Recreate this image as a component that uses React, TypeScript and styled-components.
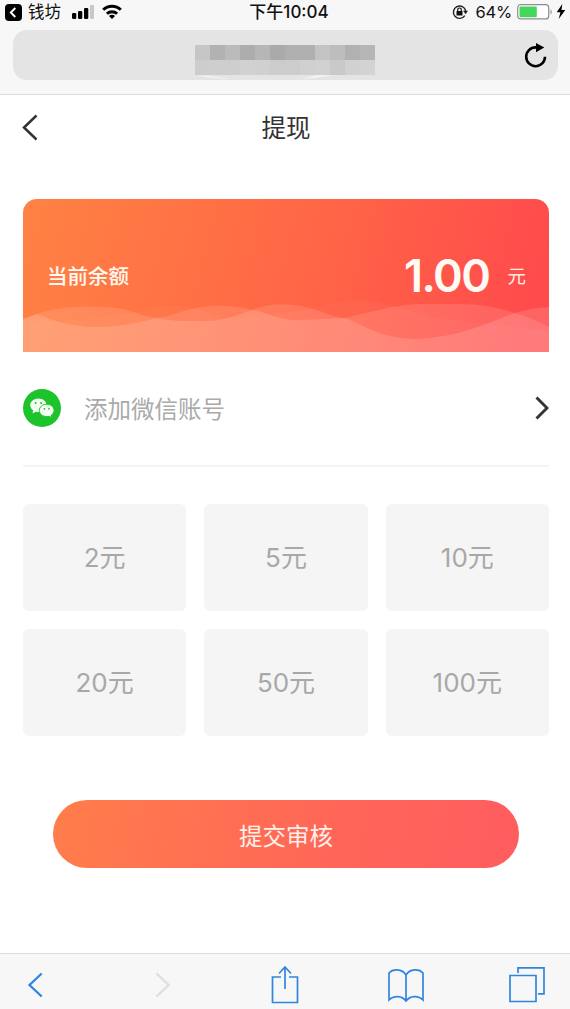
import React from "react";
import styled, { createGlobalStyle } from "styled-components";

const GlobalStyle = createGlobalStyle`
  * { box-sizing: border-box; }
  body { margin: 0; background: #fff; }
`;

const Screen = styled.div`
  display: flex;
  flex-direction: column;
  width: 570px;
  height: 1009px;
  overflow: hidden;
  background: #fff;
  color: #333;
  font-family: Inter, "Noto Sans CJK SC", sans-serif;
`;

const BrowserTop = styled.header`
  height: 95px;
  flex: none;
  background: #f7f7f7;
  border-bottom: 1px solid #dcdcdc;
`;

const StatusBar = styled.div`
  display: grid;
  grid-template-columns: 1fr auto 1fr;
  align-items: center;
  height: 24px;
  margin-bottom: 6px;
  padding: 0 4px 0 5px;
  font-size: 17px;
  line-height: 24px;
  color: #111;
`;

const StatusGroup = styled.div<{ $end?: boolean }>`
  display: flex;
  align-items: center;
  justify-content: ${(p) => (p.$end ? "flex-end" : "flex-start")};
  svg { display: block; flex: none; }
`;

const AppName = styled.span`
  margin: 0 11px 0 6px;
  font-size: 16.5px;
`;

const WifiIcon = styled.svg`
  margin-left: 7px;
  margin-bottom: 2px;
`;

const BoltIcon = styled.svg`
  margin-left: 3px;
  margin-bottom: 2px;
`;

const Clock = styled.span`
  font-size: 17px;
  font-weight: 500;
  padding-left: 7px;
`;

const Percent = styled.span`
  margin: 0 5px 0 8px;
  font-size: 16.5px;
  letter-spacing: -0.2px;
`;

const AddressBar = styled.div`
  position: relative;
  display: flex;
  align-items: center;
  justify-content: center;
  height: 50px;
  margin: 0 12px 0 13px;
  padding-right: 2px;
  border-radius: 14px;
  background: #e4e4e4;
`;

const Mosaic = styled.div`
  display: grid;
  grid-template-columns: repeat(12, 15px);
  grid-auto-rows: 15px;
  margin-top: 9px;
`;

const Block = styled.i<{ $shade: string }>`
  background: ${(p) => p.$shade};
`;

const Glare = styled.svg`
  position: absolute;
  left: 184px;
  top: 45px;
`;

const Reload = styled.svg`
  position: absolute;
  right: 9px;
  top: 12px;
`;

const TitleBar = styled.nav`
  display: grid;
  grid-template-columns: 40px 1fr 40px;
  align-items: center;
  flex: none;
  height: 66px;
  padding: 0 20px 0 22px;
  svg { display: block; margin-bottom: 1px; }
`;

const Title = styled.h1`
  margin: 0;
  font-size: 24.5px;
  font-weight: 400;
  line-height: 36px;
  text-align: center;
`;

const Content = styled.main`
  display: flex;
  flex-direction: column;
  flex: 1;
  padding: 38px 21px 0 23px;
`;

const BalanceCard = styled.section`
  position: relative;
  display: flex;
  align-items: center;
  flex: none;
  height: 153px;
  padding: 0 23px 1px 24px;
  border-radius: 14px 14px 0 0;
  overflow: hidden;
  color: #fffaf4;
  background: linear-gradient(105deg, #ff8243 0%, #ff6846 50%, #ff4b4c 95%);
`;

const Waves = styled.svg`
  position: absolute;
  left: 0;
  bottom: 0;
`;

const BalanceLabel = styled.span`
  flex: 1;
  padding-bottom: 1px;
  font-size: 20.5px;
  font-weight: 500;
`;

const BalanceValue = styled.strong`
  font-size: 45px;
  font-weight: 600;
  letter-spacing: -1.5px;
`;

const BalanceUnit = styled.span`
  margin-left: 18px;
  padding-bottom: 1px;
  font-size: 18.5px;
  color: #ffeee4;
`;

const AccountRow = styled.section`
  display: flex;
  align-items: center;
  flex: none;
  height: 115px;
  padding-bottom: 1px;
  border-bottom: 2px solid #f4f4f4;
  svg { display: block; flex: none; }
`;

const AccountText = styled.span`
  flex: 1;
  margin-left: 23px;
  font-size: 23.5px;
  color: #aaa;
`;

const Amounts = styled.section`
  display: grid;
  grid-template-columns: repeat(3, 1fr);
  grid-auto-rows: 107px;
  gap: 18px;
  margin-top: 37px;
`;

const Amount = styled.button`
  padding: 1px 0 0;
  border: 0;
  border-radius: 6px;
  background: #f5f5f5;
  color: #a8a8a8;
  font: 400 26px/38px Inter, "Noto Sans CJK SC", sans-serif;
`;

const Submit = styled.button`
  height: 68px;
  margin: 64px 30px 0;
  padding: 5px 0 0;
  border: 0;
  border-radius: 34px;
  background: linear-gradient(100deg, #ff7d4b 0%, #ff6658 60%, #ff5c5f 100%);
  color: #fff1e9;
  font: 400 23.5px/34px Inter, "Noto Sans CJK SC", sans-serif;
`;

const Toolbar = styled.footer`
  display: flex;
  align-items: center;
  flex: none;
  height: 56px;
  padding: 7px 0 0;
  border-top: 1px solid #dcdcdc;
  background: #f7f7f7;
`;

const ToolIcon = styled.svg<{ $gap: number }>`
  display: block;
  flex: none;
  margin-left: ${(p) => p.$gap}px;
  fill: none;
  stroke: #2f86e0;
  stroke-width: 1.7;
`;

const topRow = ["#c6c6c6", "#b2b2b2", "#bbbbbb", "#adadad", "#b6b6b6", "#aaaaaa", "#b0b0b0", "#b0b0b0", "#c3c3c3", "#bdbdbd", "#b1b1b1", "#b6b6b6"];
const bottomRow = ["#cdcdcd", "#cecece", "#cecece", "#d1d1d1", "#d0d0d0", "#cccccc", "#cccccc", "#d0d0d0", "#d1d1d1", "#c9c9c9", "#d1d1d1", "#d3d3d3"];
const amounts = [2, 5, 10, 20, 50, 100];

const WechatIcon = () => (
  <svg width="38" height="38" viewBox="0 0 38 38">
    <circle cx="19" cy="19" r="19" fill="#1dc32b" />
    <path d="M15.300 9.400c-4.500 0-8.100 3-8.100 6.700 0 2.200 1.200 4 3 5.300l-.7 3 3.300-1.700c.8.200 1.600.3 2.500.3 4.500 0 8.200-3 8.200-6.900s-3.700-6.700-8.200-6.700z" fill="#f4fff2" />
    <path d="M23.800 15.200c-4.200 0-7.500 2.800-7.500 6.200s3.300 6.200 7.500 6.200c.8 0 1.600-.1 2.300-.3l2.800 1.500-.7-2.600c1.800-1.100 2.900-2.800 2.900-4.800 0-3.400-3.300-6.200-7.300-6.200z" fill="#f4fff2" stroke="#1dc32b" strokeWidth="1" />
    <g fill="#1dc32b">
      <circle cx="12.600" cy="13.900" r="1" /><circle cx="18.100" cy="13.900" r="1" />
      <circle cx="21.400" cy="19.800" r=".9" /><circle cx="26" cy="19.800" r=".9" />
    </g>
  </svg>
);

export default function App() {
  return (
    <Screen>
      <GlobalStyle />
      <BrowserTop>
        <StatusBar>
          <StatusGroup>
            <svg width="17" height="17" viewBox="0 0 17 17">
              <rect width="17" height="17" rx="4" fill="#000" />
              <path d="M10.300 4 5.800 8.500l4.500 4.500" fill="none" stroke="#fff" strokeWidth="1.900" />
            </svg>
            <AppName>钱坊</AppName>
            <svg width="23" height="14" viewBox="0 0 23 14">
              <rect x="0" y="8" width="4.300" height="6" rx="1.300" />
              <rect x="6" y="6" width="4.300" height="8" rx="1.300" />
              <rect x="12" y="3" width="4.300" height="11" rx="1.300" />
              <rect x="18" y="0" width="4" height="14" rx="1.300" fill="#c8c8c8" />
            </svg>
            <WifiIcon width="20" height="15" viewBox="0 0 20 15">
              <g fill="none" stroke="#000" strokeWidth="2.900">
                <path d="M1.200 5.800a12.500 12.500 0 0 1 17.600 0" />
                <path d="M4.900 9.800a7.300 7.300 0 0 1 10.200 0" />
              </g>
              <path d="M10 15 7 12a4.200 4.200 0 0 1 6 0z" />
            </WifiIcon>
          </StatusGroup>
          <Clock>下午10:04</Clock>
          <StatusGroup $end>
            <svg width="16" height="16" viewBox="0 0 16 16">
              <path d="M12.800 11.600A6.200 6.200 0 1 1 13.700 7" fill="none" stroke="#222" strokeWidth="1.400" />
              <path d="M11 6.800h5l-2.400 3.400z" fill="#222" />
              <rect x="4.500" y="6.900" width="6" height="4.600" rx=".5" fill="#111" />
              <path d="M5.700 7V5.800a1.800 1.800 0 0 1 3.600 0V7" fill="none" stroke="#111" strokeWidth="1.200" />
            </svg>
            <Percent>64%</Percent>
            <svg width="36" height="16" viewBox="0 0 36 16">
              <rect x=".7" y=".7" width="31" height="14.200" rx="3" fill="#fff" stroke="#8d8d8d" strokeWidth="1.200" />
              <rect x="2.500" y="2.400" width="17.300" height="10.800" rx="1" fill="#45d75d" />
              <path d="M33.500 5.400c1.600.6 1.600 4.200 0 4.800z" fill="#8d8d8d" />
            </svg>
            <BoltIcon width="10" height="15" viewBox="0 0 10 15">
              <path d="M6.300 0 .7 8.200h3.700L2.700 15l6.600-9H5.500z" />
            </BoltIcon>
          </StatusGroup>
        </StatusBar>
        <AddressBar>
          <Mosaic>
            {[...topRow, ...bottomRow].map((shade, i) => <Block key={i} $shade={shade} />)}
          </Mosaic>
          <Glare width="150" height="5" viewBox="0 0 150 5">
            <path d="M0 .800q15 3 34 3.200Q20 2 10 .800zM104 4Q124 3 136 .300h-18q-5 2-14 3.700z" fill="#f3f3f3" />
          </Glare>
          <Reload width="28" height="28" viewBox="0 0 28 28">
            <path d="M24 14.800A9.400 9.400 0 1 1 14.600 5.400H17" fill="none" stroke="#000" strokeWidth="2.600" />
            <path d="M15 .900v9.400l8.300-4.700z" />
          </Reload>
        </AddressBar>
      </BrowserTop>

      <TitleBar>
        <svg width="16" height="27" viewBox="0 0 16 27">
          <path d="M14.500 1.500 2 13.500l12.500 12" fill="none" stroke="#333" strokeWidth="2.500" />
        </svg>
        <Title>提现</Title>
      </TitleBar>

      <Content>
        <BalanceCard>
          <Waves width="526" height="153" viewBox="0 0 526 153" fill="#fff">
            <path fillOpacity=".03" d="M0 153V122Q60 124 117 112Q140 104 166 108L210 120L290 110Q330 94 370 107L420 120L526 132V153z" />
            <path fillOpacity=".12" d="M0 153V120L14 115C36 106 88 105 110 113Q123 118 134 119Q145 118 155 114C180 105 207 105 229 111C251 102 275 104 299 113Q310 118 322 119C348 113 373 105 402 105H430C466 104 487 112 509 120L526 128V153z" />
            <path fillOpacity=".14" d="M0 153V120L14 115C35 123 51 128 72 128C99 128 119 123 134 119C150 123 169 122 185 122C204 121 216 115 229 111C247 114 259 123 279 121L322 119C350 131 363 140 395 140C438 137 459 126 479 119C497 111 512 109 526 108V153z" />
          </Waves>
          <BalanceLabel>当前余额</BalanceLabel>
          <BalanceValue>1.00</BalanceValue>
          <BalanceUnit>元</BalanceUnit>
        </BalanceCard>

        <AccountRow>
          <WechatIcon />
          <AccountText>添加微信账号</AccountText>
          <svg width="15" height="24" viewBox="0 0 15 24">
            <path d="M2.500 1.500 13 12 2.500 22.500" fill="none" stroke="#333" strokeWidth="2.900" />
          </svg>
        </AccountRow>

        <Amounts>
          {amounts.map((n) => <Amount key={n}>{n}元</Amount>)}
        </Amounts>

        <Submit>提交审核</Submit>
      </Content>

      <Toolbar>
        <ToolIcon $gap={27} width="17" height="26" viewBox="0 0 17 26">
          <path d="M14.700 1.500 2.500 13l12.200 11.500" strokeWidth="2.300" />
        </ToolIcon>
        <ToolIcon $gap={110} width="17" height="26" viewBox="0 0 17 26">
          <path d="M2.500 1.500 14.700 13 2.500 24.500" stroke="#dedede" strokeWidth="2.300" />
        </ToolIcon>
        <ToolIcon $gap={100} width="28" height="39" viewBox="0 0 28 39">
          <path d="M10 11H1.500v25.500h25V11H18M14 23V1.500M8 7.500l6-6.500 6 6.500" />
        </ToolIcon>
        <ToolIcon $gap={89} width="36" height="35" viewBox="0 0 36 35">
          <path d="M18 33V7C14 .500 5 .500 1 5V32c5-5 13-4.500 17 1 4-5.500 12-6 17-1V5C31 .500 22 .500 18 7" />
        </ToolIcon>
        <ToolIcon $gap={85} width="36" height="36" viewBox="0 0 36 36">
          <path d="M1 8.500h26v26H1zM9 6V.900h26v26h-6" />
        </ToolIcon>
      </Toolbar>
    </Screen>
  );
}
